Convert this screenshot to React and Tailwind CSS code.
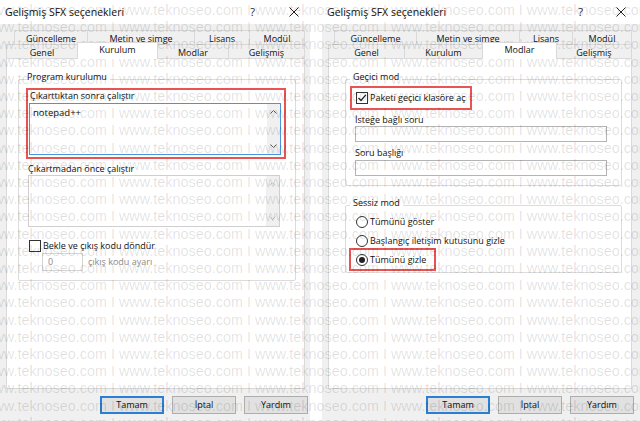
import React from "react";

const WM = "www.teknoseo.com I ".repeat(6);

function Watermark() {
  return (
    <div className="pointer-events-none absolute inset-0 overflow-hidden">
      <div className="absolute left-[-17px] top-[2px] whitespace-pre font-['Liberation_Sans',Arial,sans-serif] text-[14.4px] leading-[17.2px] text-black/[0.12]">
        {Array.from({ length: 25 }).map((_, i) => (
          <div key={i}>{WM}</div>
        ))}
      </div>
    </div>
  );
}

function Chevron({ dir, color }) {
  return (
    <svg width="7" height="4" viewBox="0 0 7 4">
      <path
        d={dir === "up" ? "M0.5 3.5 L3.5 0.5 L6.5 3.5" : "M0.5 0.5 L3.5 3.5 L6.5 0.5"}
        fill="none"
        stroke={color}
        strokeWidth="1"
      />
    </svg>
  );
}

function CloseIcon() {
  return (
    <svg width="10" height="10" viewBox="0 0 10 10">
      <path d="M0.5 0.5 L9.5 9.5 M9.5 0.5 L0.5 9.5" stroke="#222" strokeWidth="1" fill="none" />
    </svg>
  );
}

function TitleBar({ gapClass, prClass }) {
  return (
    <div className={`flex h-[24px] items-center bg-white pl-[5px] ${prClass}`}>
      <span className="text-[10.5px] leading-[12px] text-[#111]">Gelişmiş SFX seçenekleri</span>
      <div className="flex-1" />
      <span className="text-[11px] leading-[12px] text-[#222]">?</span>
      <div className={gapClass} />
      <CloseIcon />
    </div>
  );
}

function Tab({ w, label, selected, first }) {
  if (selected) {
    return (
      <div
        className={`${w} relative z-10 -mb-px flex h-[17px] items-start justify-center border border-b-0 border-[#d9d9d9] bg-white pt-[1px] text-[9px] leading-[12px] text-[#111] ${first ? "" : "-ml-px"}`}
      >
        {label}
      </div>
    );
  }
  return (
    <div
      className={`${w} flex h-[14px] items-center justify-center border border-b-0 border-[#d9d9d9] bg-[#f0f0f0] pt-[2px] text-[9px] leading-[12px] text-[#111] ${first ? "" : "-ml-px"}`}
    >
      {label}
    </div>
  );
}

function TextArea({ active, text }) {
  return (
    <div
      className={`flex h-[52px] w-[252px] border bg-white ${active ? "border-[#4a94dc]" : "border-[#cfcfcf]"}`}
    >
      <div className="flex-1 px-[3px] pt-[2px] text-[9.5px] leading-[13px] text-[#111]">{text}</div>
      <div className="flex w-[13px] flex-col items-center justify-between bg-[#f0f0f0] py-[6px]">
        <Chevron dir="up" color={active ? "#606060" : "#c4c4c4"} />
        <Chevron dir="down" color={active ? "#606060" : "#c4c4c4"} />
      </div>
    </div>
  );
}

function CheckBox({ checked }) {
  return (
    <div className="flex h-[12px] w-[12px] shrink-0 items-center justify-center border border-[#333] bg-white">
      {checked && (
        <svg width="10" height="10" viewBox="0 0 10 10">
          <path d="M1.5 5 L4 7.5 L8.8 1.8" fill="none" stroke="#222" strokeWidth="1.3" />
        </svg>
      )}
    </div>
  );
}

function Radio({ checked }) {
  return (
    <div className="flex h-[12px] w-[12px] shrink-0 items-center justify-center rounded-full border border-[#333] bg-white">
      {checked && <div className="h-[6px] w-[6px] rounded-full bg-[#222]" />}
    </div>
  );
}

function Button({ label, primary }) {
  return (
    <div
      className={`flex h-[18px] w-[64px] items-center justify-center bg-[#e1e1e1] text-[9px] leading-[12px] text-[#111] ${primary ? "border-2 border-[#2a7fd4]" : "border border-[#adadad]"}`}
    >
      {label}
    </div>
  );
}

function Buttons({ prClass }) {
  return (
    <div className={`mt-[7px] flex justify-end gap-[8px] ${prClass}`}>
      <Button label="Tamam" primary />
      <Button label="İptal" />
      <Button label="Yardım" />
    </div>
  );
}

function LeftDialog() {
  return (
    <div className="flex w-[310px] flex-col bg-[#f0f0f0]">
      <TitleBar gapClass="w-[34px]" prClass="pr-[11px]" />
      <div className="pt-[6px]">
        <div className="ml-[14px] flex h-[14px] items-end">
          <Tab w="w-[74px]" label="Güncelleme" first />
          <Tab w="w-[108px]" label="Metin ve simge" />
          <Tab w="w-[56px]" label="Lisans" />
          <Tab w="w-[56px]" label="Modül" />
        </div>
        <div className="ml-[6px] flex h-[14px] items-end">
          <Tab w="w-[72px]" label="Genel" first />
          <Tab w="w-[81px]" label="Kurulum" selected />
          <Tab w="w-[72px]" label="Modlar" />
          <Tab w="w-[77px]" label="Gelişmiş" />
        </div>
      </div>
      <div className="ml-[6px] h-[331px] w-[299px] border border-[#d9d9d9] bg-white">
        <fieldset className="ml-[11px] mt-[12px] w-[278px] rounded-[2px] border border-[#dcdcdc] pb-[9px]">
          <legend className="ml-[5px] px-[3px] pb-[5px] text-[9px] leading-[12px] text-[#111]">
            Program kurulumu
          </legend>
          <div className="ml-[7px] h-[71px] w-[260px] border-2 border-[#e95353]">
            <div className="pl-[2px] text-[9px] leading-[12px] text-[#111]">Çıkarttıktan sonra çalıştır</div>
            <div className="ml-[1px] mt-[1px]">
              <TextArea active text="notepad++" />
            </div>
          </div>
          <div className="ml-[9px] mt-[4px] text-[9px] leading-[12px] text-[#111]">Çıkartmadan önce çalıştır</div>
          <div className="ml-[9px]">
            <TextArea />
          </div>
          <div className="ml-[10px] mt-[13px] flex h-[12px] items-center">
            <CheckBox />
            <span className="ml-[2px] text-[9px] leading-[12px] text-[#111]">Bekle ve çıkış kodu döndür</span>
          </div>
          <div className="ml-[23px] mt-[1px] flex items-center">
            <div className="flex h-[18px] w-[41px] items-center border border-[#d6d6d6] bg-white pl-[5px] text-[9px] leading-[12px] text-[#8a8a8a]">
              0
            </div>
            <span className="ml-[5px] text-[9px] leading-[12px] text-[#8a8a8a]">çıkış kodu ayarı</span>
          </div>
        </fieldset>
      </div>
      <Buttons prClass="pr-[2px]" />
    </div>
  );
}

function RightDialog() {
  return (
    <div className="ml-[12px] flex w-[318px] flex-col bg-[#f0f0f0]">
      <TitleBar gapClass="w-[33px]" prClass="pr-[14px]" />
      <div className="pt-[6px]">
        <div className="ml-[12px] flex h-[14px] items-end">
          <Tab w="w-[83px]" label="Güncelleme" first />
          <Tab w="w-[104px]" label="Metin ve simge" />
          <Tab w="w-[54px]" label="Lisans" />
          <Tab w="w-[60px]" label="Modül" />
        </div>
        <div className="ml-[6px] flex h-[14px] items-end">
          <Tab w="w-[77px]" label="Genel" first />
          <Tab w="w-[79px]" label="Kurulum" />
          <Tab w="w-[75px]" label="Modlar" selected />
          <Tab w="w-[76px]" label="Gelişmiş" />
        </div>
      </div>
      <div className="ml-[6px] h-[331px] w-[304px] border border-[#d9d9d9] bg-white">
        <fieldset className="ml-[16px] mt-[12px] w-[277px] rounded-[2px] border border-[#dcdcdc] pb-[9px]">
          <legend className="ml-[4px] px-[3px] pb-[5px] text-[9px] leading-[12px] text-[#111]">Geçici mod</legend>
          <div className="-mt-[2px] ml-[4px] flex h-[24px] w-[122px] items-center border-2 border-[#e95353] pl-[4px]">
            <CheckBox checked />
            <span className="ml-[2px] text-[9px] leading-[12px] text-[#111]">Paketi geçici klasöre aç</span>
          </div>
          <div className="ml-[9px] mt-[4px] text-[9px] leading-[12px] text-[#111]">İsteğe bağlı soru</div>
          <div className="ml-[9px] h-[16px] w-[252px] border border-[#b4b4b4] bg-white" />
          <div className="ml-[9px] mt-[5px] text-[9px] leading-[12px] text-[#111]">Soru başlığı</div>
          <div className="ml-[9px] mt-[1px] h-[16px] w-[252px] border border-[#b4b4b4] bg-white" />
        </fieldset>
        <fieldset className="ml-[16px] mt-[11px] w-[277px] rounded-[2px] border border-[#dcdcdc] pb-[1px]">
          <legend className="ml-[4px] px-[3px] pb-[5px] text-[9px] leading-[12px] text-[#111]">Sessiz mod</legend>
          <div className="flex h-[16px] items-center pl-[10px]">
            <Radio />
            <span className="ml-[2px] text-[9px] leading-[12px] text-[#111]">Tümünü göster</span>
          </div>
          <div className="mt-[3px] flex h-[16px] items-center pl-[10px]">
            <Radio />
            <span className="ml-[2px] text-[9px] leading-[12px] text-[#111]">Başlangıç iletişim kutusunu gizle</span>
          </div>
          <div className="-mt-[1px] ml-[3px] flex h-[23px] w-[87px] items-center border-2 border-[#e95353] pl-[5px]">
            <Radio checked />
            <span className="ml-[2px] text-[9px] leading-[12px] text-[#111]">Tümünü gizle</span>
          </div>
        </fieldset>
      </div>
      <Buttons prClass="pr-[6px]" />
    </div>
  );
}

export default function App() {
  return (
    <div className="relative flex h-[421px] w-[640px] overflow-hidden bg-white font-['Open_Sans','Noto_Sans',sans-serif]">
      <LeftDialog />
      <RightDialog />
      <Watermark />
    </div>
  );
}
